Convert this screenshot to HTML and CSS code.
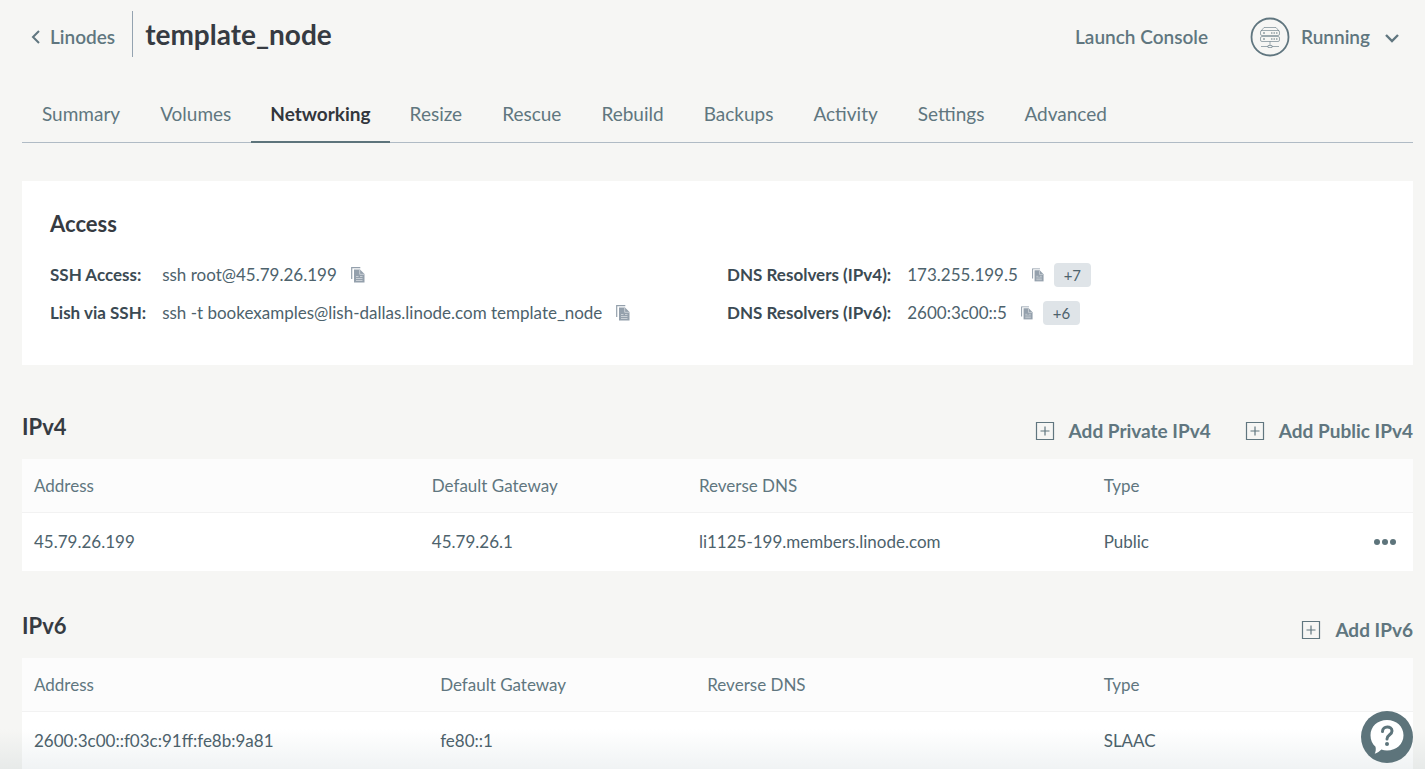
FILE: index.html
```html
<!DOCTYPE html>
<html lang="en">
<head>
<meta charset="utf-8">
<meta name="viewport" content="width=device-width, initial-scale=1">
<title>template_node</title>
<link rel="stylesheet" href="styles.css">
</head>
<body>
<svg class="symbols" aria-hidden="true">
  <symbol id="copy" viewBox="0 0 14 16">
    <path d="M.7 12V.7h8.600" fill="none" stroke="currentColor" stroke-width="1.200"/>
    <path d="M3 2.500h6l4.500 4.500v8.500H3z" fill="currentColor"/>
    <path d="M8.700 3v4.300h4.500M5 9.500h2.500M9 9.500h2.500M5 11.500h6.500M5 13.500h6.500" fill="none" stroke="#fff" stroke-width=".5"/>
  </symbol>
  <symbol id="plus" viewBox="0 0 20 20">
    <path d="M1.500 1.500h17v17h-17zM10 5.500v9M5.500 10h9" fill="none" stroke="currentColor" stroke-width="1.200"/>
  </symbol>
</svg>
<div class="page">
  <header class="header">
    <nav class="crumbs">
      <a class="back" href="#"><svg class="back-icon" viewBox="0 0 10 14" aria-hidden="true"><path d="M8 1L2 7l6 6" fill="none" stroke="currentColor" stroke-width="2"/></svg>Linodes</a>
      <h1 class="title">template_node</h1>
    </nav>
    <div class="actions">
      <button class="action" type="button">Launch Console</button>
      <button class="action status" type="button">
        <svg class="status-icon" viewBox="0 0 40 40" aria-hidden="true" fill="none" stroke="currentColor">
          <circle cx="20" cy="20" r="18.500" stroke-width="1.800"/>
          <g stroke-width=".6"><path d="M11 14l3-3.500h12l3 3.500M12 13.500h16q1.500 0 1.500 1.500v2q0 1.500-1.500 1.500H12q-1.500 0-1.500-1.500v-2q0-1.500 1.500-1.500zM12 19.500h16q1.500 0 1.500 1.500v2q0 1.500-1.500 1.500H12q-1.500 0-1.500-1.500v-2q0-1.500 1.500-1.500zM20 24.500v4M11 29.500h7m4 0h7M18 28.500h4v2h-4z"/><path d="M13 16h2M21 16h1.500m1 0H25m1 0h1.500M13 22h2m6 0h1.500m1 0H25m1 0h1.500" stroke-width="1"/></g>
        </svg>
        Running
        <svg class="chevron" viewBox="0 0 14 12" aria-hidden="true"><path d="M1 4l6 6 6-6" fill="none" stroke="currentColor" stroke-width="2.400"/></svg>
      </button>
    </div>
  </header>

  <nav class="tabs">
    <a class="tab" href="#">Summary</a>
    <a class="tab" href="#">Volumes</a>
    <a class="tab tab-active" href="#" aria-current="page">Networking</a>
    <a class="tab" href="#">Resize</a>
    <a class="tab" href="#">Rescue</a>
    <a class="tab" href="#">Rebuild</a>
    <a class="tab" href="#">Backups</a>
    <a class="tab" href="#">Activity</a>
    <a class="tab" href="#">Settings</a>
    <a class="tab" href="#">Advanced</a>
  </nav>

  <section class="access">
    <h2 class="heading">Access</h2>
    <div class="access-columns">
      <dl class="facts">
        <dt>SSH Access:</dt>
        <dd>ssh root@45.79.26.199 <button class="copy" type="button" aria-label="Copy SSH command"><svg viewBox="0 0 14 16"><use href="#copy"/></svg></button></dd>
        <dt>Lish via SSH:</dt>
        <dd>ssh -t bookexamples@lish-dallas.linode.com template_node <button class="copy" type="button" aria-label="Copy Lish command"><svg viewBox="0 0 14 16"><use href="#copy"/></svg></button></dd>
      </dl>
      <dl class="facts resolvers">
        <dt>DNS Resolvers (IPv4):</dt>
        <dd>173.255.199.5 <button class="copy" type="button" aria-label="Copy IPv4 resolver"><svg viewBox="0 0 14 16"><use href="#copy"/></svg></button><button class="more" type="button">+7</button></dd>
        <dt>DNS Resolvers (IPv6):</dt>
        <dd>2600:3c00::5 <button class="copy" type="button" aria-label="Copy IPv6 resolver"><svg viewBox="0 0 14 16"><use href="#copy"/></svg></button><button class="more" type="button">+6</button></dd>
      </dl>
    </div>
  </section>

  <section class="network">
    <div class="network-bar">
      <h2 class="heading">IPv4</h2>
      <div class="adders">
        <button class="add" type="button"><svg viewBox="0 0 20 20" aria-hidden="true"><use href="#plus"/></svg>Add Private IPv4</button>
        <button class="add" type="button"><svg viewBox="0 0 20 20" aria-hidden="true"><use href="#plus"/></svg>Add Public IPv4</button>
      </div>
    </div>
    <table class="table table-v4">
      <thead><tr><th class="address">Address</th><th class="gateway">Default Gateway</th><th class="reverse">Reverse DNS</th><th class="type">Type</th><th class="menu"></th></tr></thead>
      <tbody><tr><td>45.79.26.199</td><td>45.79.26.1</td><td>li1125-199.members.linode.com</td><td>Public</td><td class="menu"><button class="dots" type="button" aria-label="Actions"><svg viewBox="0 0 24 8" fill="currentColor"><circle cx="4" cy="4" r="3"/><circle cx="12" cy="4" r="3"/><circle cx="20" cy="4" r="3"/></svg></button></td></tr></tbody>
    </table>
  </section>

  <section class="network">
    <div class="network-bar">
      <h2 class="heading">IPv6</h2>
      <div class="adders">
        <button class="add" type="button"><svg viewBox="0 0 20 20" aria-hidden="true"><use href="#plus"/></svg>Add IPv6</button>
      </div>
    </div>
    <table class="table table-v6">
      <thead><tr><th class="address">Address</th><th class="gateway">Default Gateway</th><th class="reverse">Reverse DNS</th><th class="type">Type</th><th class="menu"></th></tr></thead>
      <tbody><tr><td>2600:3c00::f03c:91ff:fe8b:9a81</td><td>fe80::1</td><td></td><td>SLAAC</td><td></td></tr></tbody>
    </table>
  </section>
</div>
<div class="fade"></div>
<button class="help" type="button" aria-label="Help">
  <svg viewBox="0 0 52 52" aria-hidden="true">
    <circle cx="26" cy="26" r="26" fill="#5d747b"/>
    <path d="M26 9c9.500 0 16.500 6.500 16.500 15.300S35.500 39.500 26 39.500c-2 0-4-.3-5.700-.9-1.600 1.700-4 3.300-6.600 4.200 1-2 1.400-4.500.8-7C11.300 33 9.500 29 9.500 24.300 9.500 15.500 16.500 9 26 9z" fill="#fff"/>
    <path d="M21.500 20.500c0-6 9.500-6 9.500-.5 0 4-5 3.500-5 8" fill="none" stroke="#5d747b" stroke-width="3" stroke-linecap="round"/>
    <circle cx="26" cy="33" r="2" fill="#5d747b"/>
  </svg>
</button>
</body>
</html>
```
FILE: styles.css
```css
* { box-sizing: border-box; }
body {
  margin: 0;
  background: #f6f6f4;
  color: #4d626c;
  font: 17px/24px Lato, "Liberation Sans", sans-serif;
}
h1, h2, dl, dd { margin: 0; }
a { color: inherit; text-decoration: none; }
button {
  padding: 0;
  border: 0;
  background: none;
  color: inherit;
  font: inherit;
  cursor: pointer;
}
svg { display: block; flex: none; }
.symbols { position: absolute; width: 0; height: 0; }
.page { padding: 11px 12px 0 22px; }

.header { display: flex; justify-content: space-between; }
.crumbs { display: flex; height: 46px; }
.back {
  display: flex;
  align-items: center;
  gap: 9px;
  padding: 6px 17px 0 9px;
  border-right: 1px solid #94a3b0;
  color: #60767f;
  font-size: 19px;
  font-weight: 600;
}
.back-icon { width: 10px; height: 14px; }
.title {
  padding-left: 12px;
  color: #363b42;
  font-size: 28px;
  line-height: 46px;
  font-weight: 700;
}
.actions { display: flex; align-items: center; gap: 42px; padding: 6px 14px 0 0; }
.action { color: #60767f; font-size: 19px; font-weight: 600; }
.status { display: flex; align-items: center; gap: 11px; }
.status-icon { width: 40px; height: 40px; }
.chevron { width: 14px; height: 12px; margin-left: 4px; }

.tabs { display: flex; height: 57px; margin-top: 29px; border-bottom: 1px solid #b0bbc5; }
.tab { height: 57px; padding: 0 20px; color: #60767f; font-size: 19px; line-height: 56px; }
.tab-active { padding: 0 19px; border-bottom: 2px solid #5d747b; color: #32363c; font-weight: 700; }

.access { margin-top: 38px; padding: 28px; background: #fff; }
.heading { color: #363b42; font-size: 22px; line-height: 30px; font-weight: 700; }
.access-columns { display: grid; grid-template-columns: 677fr 658fr; margin-top: 17px; padding-bottom: 5px; }
.facts {
  display: grid;
  grid-template-columns: max-content 1fr;
  grid-auto-rows: 38px;
  align-items: center;
  column-gap: 16px;
}
.facts dt { color: #3b4a53; font-weight: 700; }
.facts dd { display: flex; align-items: center; }
.copy { margin-left: 14px; color: #94a0ac; }
.copy svg { width: 14px; height: 16px; }
.resolvers .copy svg { width: 12px; height: 14px; }
.more {
  width: 37px;
  height: 24px;
  margin-left: 10px;
  border-radius: 4px;
  background: #dfe4e8;
  font-size: 15px;
}

.network { margin-top: 47px; }
.network + .network { margin-top: 40px; }
.network-bar { display: flex; align-items: flex-start; justify-content: space-between; height: 47px; }
.adders { display: flex; gap: 34px; padding-top: 7px; }
.add { display: flex; align-items: center; gap: 14px; color: #60767f; font-size: 19px; font-weight: 700; }
.add svg { width: 20px; height: 20px; }

.table { width: 100%; border-spacing: 0; table-layout: fixed; background: #fff; }
.table th, .table td { padding: 0 12px; text-align: left; }
.table th { height: 54px; border-bottom: 1px solid #f2f2f2; background: #fcfcfc; color: #60767f; font-weight: 400; }
.table td { height: 58px; }
.address { width: 28.6%; }
.gateway { width: 19.2%; }
.reverse { width: 29.1%; }
.table-v6 .address { width: 29.2%; }
.table-v6 .reverse { width: 28.5%; }
.table .menu { padding-right: 16px; }
.dots { display: block; margin-left: auto; color: #5d747b; }
.dots svg { width: 24px; height: 8px; }

.fade {
  position: fixed;
  inset: auto 0 0;
  height: 40px;
  background: linear-gradient(#fff, #f0f3f4);
  mix-blend-mode: multiply;
  pointer-events: none;
}
.help { position: fixed; right: 12px; bottom: 6px; }
.help svg { width: 52px; height: 52px; }
```
